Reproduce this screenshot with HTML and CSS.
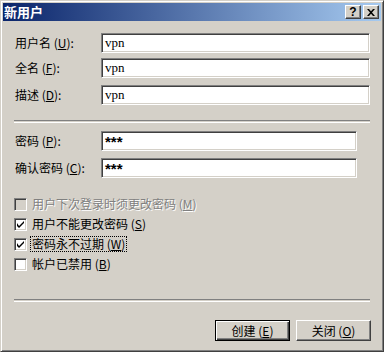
FILE: index.html
```html
<!DOCTYPE html>
<html>
<head>
    <meta charset="UTF-8">
    <title>新用户</title>
    <link rel="stylesheet" href="styles.css">
</head>
<body>

<div class="window">

    <div class="title-bar">
        <span class="title-text">新用户</span>
        <span class="title-buttons">
            <span class="title-btn title-help">?</span>
            <span class="title-btn">
                <svg width="8" height="7" viewBox="0 0 8 7">
                    <path d="M0 0h2l2 2.2l2-2.2h2l-3 3.5l3 3.5h-2l-2-2.2l-2 2.2h-2l3-3.5z" fill="#000"/>
                </svg>
            </span>
        </span>
    </div>

    <div class="content">

        <div class="field field-1">
            <label class="field-label">用户名 (<u>U</u>):</label>
            <div class="text-box wide">vpn</div>
        </div>

        <div class="field field-2">
            <label class="field-label">全名 (<u>F</u>):</label>
            <div class="text-box wide">vpn</div>
        </div>

        <div class="field field-3">
            <label class="field-label">描述 (<u>D</u>):</label>
            <div class="text-box wide">vpn</div>
        </div>

        <div class="separator sep-1"></div>

        <div class="field field-4">
            <label class="field-label">密码 (<u>P</u>):</label>
            <div class="text-box narrow password">***</div>
        </div>

        <div class="field field-5">
            <label class="field-label">确认密码 (<u>C</u>):</label>
            <div class="text-box narrow password">***</div>
        </div>

        <div class="checks">
            <div class="check-row disabled">
                <span class="check-box"></span>
                <span class="check-label">用户下次登录时须更改密码 (<u>M</u>)</span>
            </div>
            <div class="check-row">
                <span class="check-box">
                    <svg width="7" height="7" viewBox="0 0 7 7"><path d="M0 2v3l2 2l5-5v-2l-5 5z" fill="#000"/></svg>
                </span>
                <span class="check-label">用户不能更改密码 (<u>S</u>)</span>
            </div>
            <div class="check-row">
                <span class="check-box">
                    <svg width="7" height="7" viewBox="0 0 7 7"><path d="M0 2v3l2 2l5-5v-2l-5 5z" fill="#000"/></svg>
                </span>
                <span class="check-label focused">密码永不过期 (<u>W</u>)</span>
            </div>
            <div class="check-row">
                <span class="check-box"></span>
                <span class="check-label">帐户已禁用 (<u>B</u>)</span>
            </div>
        </div>

        <div class="separator sep-2"></div>

        <div class="button-row">
            <span class="push-btn default-btn">创建 (<u>E</u>)</span>
            <span class="push-btn">关闭 (<u>O</u>)</span>
        </div>

    </div>
</div>

</body>
</html>
```

FILE: styles.css
```css
body {
    margin: 0;
    background: #d4d0c8;
    font-family: "Noto Sans CJK SC", "Liberation Sans", sans-serif;
    font-size: 12px;
}

.window {
    width: 384px;
    height: 352px;
    box-sizing: border-box;
    border: 1px solid;
    border-color: #d4d0c8 #404040 #404040 #d4d0c8;
    box-shadow: inset 1px 1px #fff, inset -1px -1px #808080;
    padding: 2px;
    background: #d4d0c8;
}

.title-bar {
    height: 18px;
    display: flex;
    align-items: center;
    justify-content: space-between;
    background: linear-gradient(to right, #0a246a, #a6caf0);
    padding: 0 2px 0 1px;
}

.title-text {
    color: #fff;
    font-weight: bold;
    font-size: 13px;
    line-height: 18px;
}

.title-buttons {
    display: flex;
    gap: 2px;
}

.title-btn {
    width: 16px;
    height: 14px;
    box-sizing: border-box;
    border: 1px solid;
    border-color: #fff #404040 #404040 #fff;
    box-shadow: inset -1px -1px #808080;
    background: #d4d0c8;
    display: flex;
    align-items: center;
    justify-content: center;
}

.title-help {
    font-family: "Liberation Sans", sans-serif;
    font-weight: bold;
    font-size: 12px;
    line-height: 12px;
    color: #000;
}

.content {
    padding: 12px 10px 0 12px;
}

.field {
    display: flex;
    align-items: center;
    height: 20px;
}

.field-2 {
    margin-top: 5px;
}

.field-3 {
    margin-top: 7px;
}

.field-4 {
    margin-top: 8px;
}

.field-5 {
    margin-top: 7px;
}

.field-label {
    width: 86px;
    line-height: 16px;
    color: #000;
}

.text-box {
    height: 20px;
    box-sizing: border-box;
    border: 1px solid;
    border-color: #808080 #fff #fff #808080;
    box-shadow: inset 1px 1px #404040, inset -1px -1px #d4d0c8;
    background: #fff;
    padding: 0 3px;
    font-family: "Liberation Serif", serif;
    font-size: 13px;
    line-height: 17px;
    color: #000;
}

.wide {
    width: 269px;
}

.narrow {
    width: 256px;
}

.password {
    font-family: "Liberation Sans", sans-serif;
    font-size: 15px;
    font-weight: bold;
    line-height: 20px;
}

.separator {
    width: 356px;
    margin-left: -1px;
    height: 1px;
    border-top: 1px solid #808080;
    border-bottom: 1px solid #fff;
}

.sep-1 {
    margin-top: 15px;
}

.sep-2 {
    margin-top: 25px;
}

.checks {
    margin-top: 16px;
}

.check-row {
    display: flex;
    align-items: center;
    height: 20px;
    margin-left: -1px;
}

.check-box {
    width: 13px;
    height: 13px;
    box-sizing: border-box;
    border: 1px solid;
    border-color: #808080 #fff #fff #808080;
    box-shadow: inset 1px 1px #404040, inset -1px -1px #d4d0c8;
    background: #fff;
    display: flex;
    align-items: center;
    justify-content: center;
}

.check-label {
    margin-left: 3px;
    padding: 0 1px;
    border: 1px solid transparent;
    line-height: 14px;
    color: #000;
}

.check-label.focused {
    border: 1px dotted #000;
}

.disabled .check-box {
    background: #d4d0c8;
}

.disabled .check-label {
    color: #808080;
    text-shadow: 1px 1px #fff;
}

.button-row {
    display: flex;
    justify-content: flex-end;
    gap: 6px;
    margin-top: 18px;
}

.push-btn {
    width: 75px;
    height: 21px;
    box-sizing: border-box;
    border: 1px solid;
    border-color: #fff #404040 #404040 #fff;
    box-shadow: inset -1px -1px #808080;
    display: flex;
    align-items: center;
    justify-content: center;
    color: #000;
    line-height: 14px;
}

.default-btn {
    border: 1px solid #000;
    box-shadow: inset 1px 1px #fff, inset -1px -1px #404040, inset -2px -2px #808080;
}
```
